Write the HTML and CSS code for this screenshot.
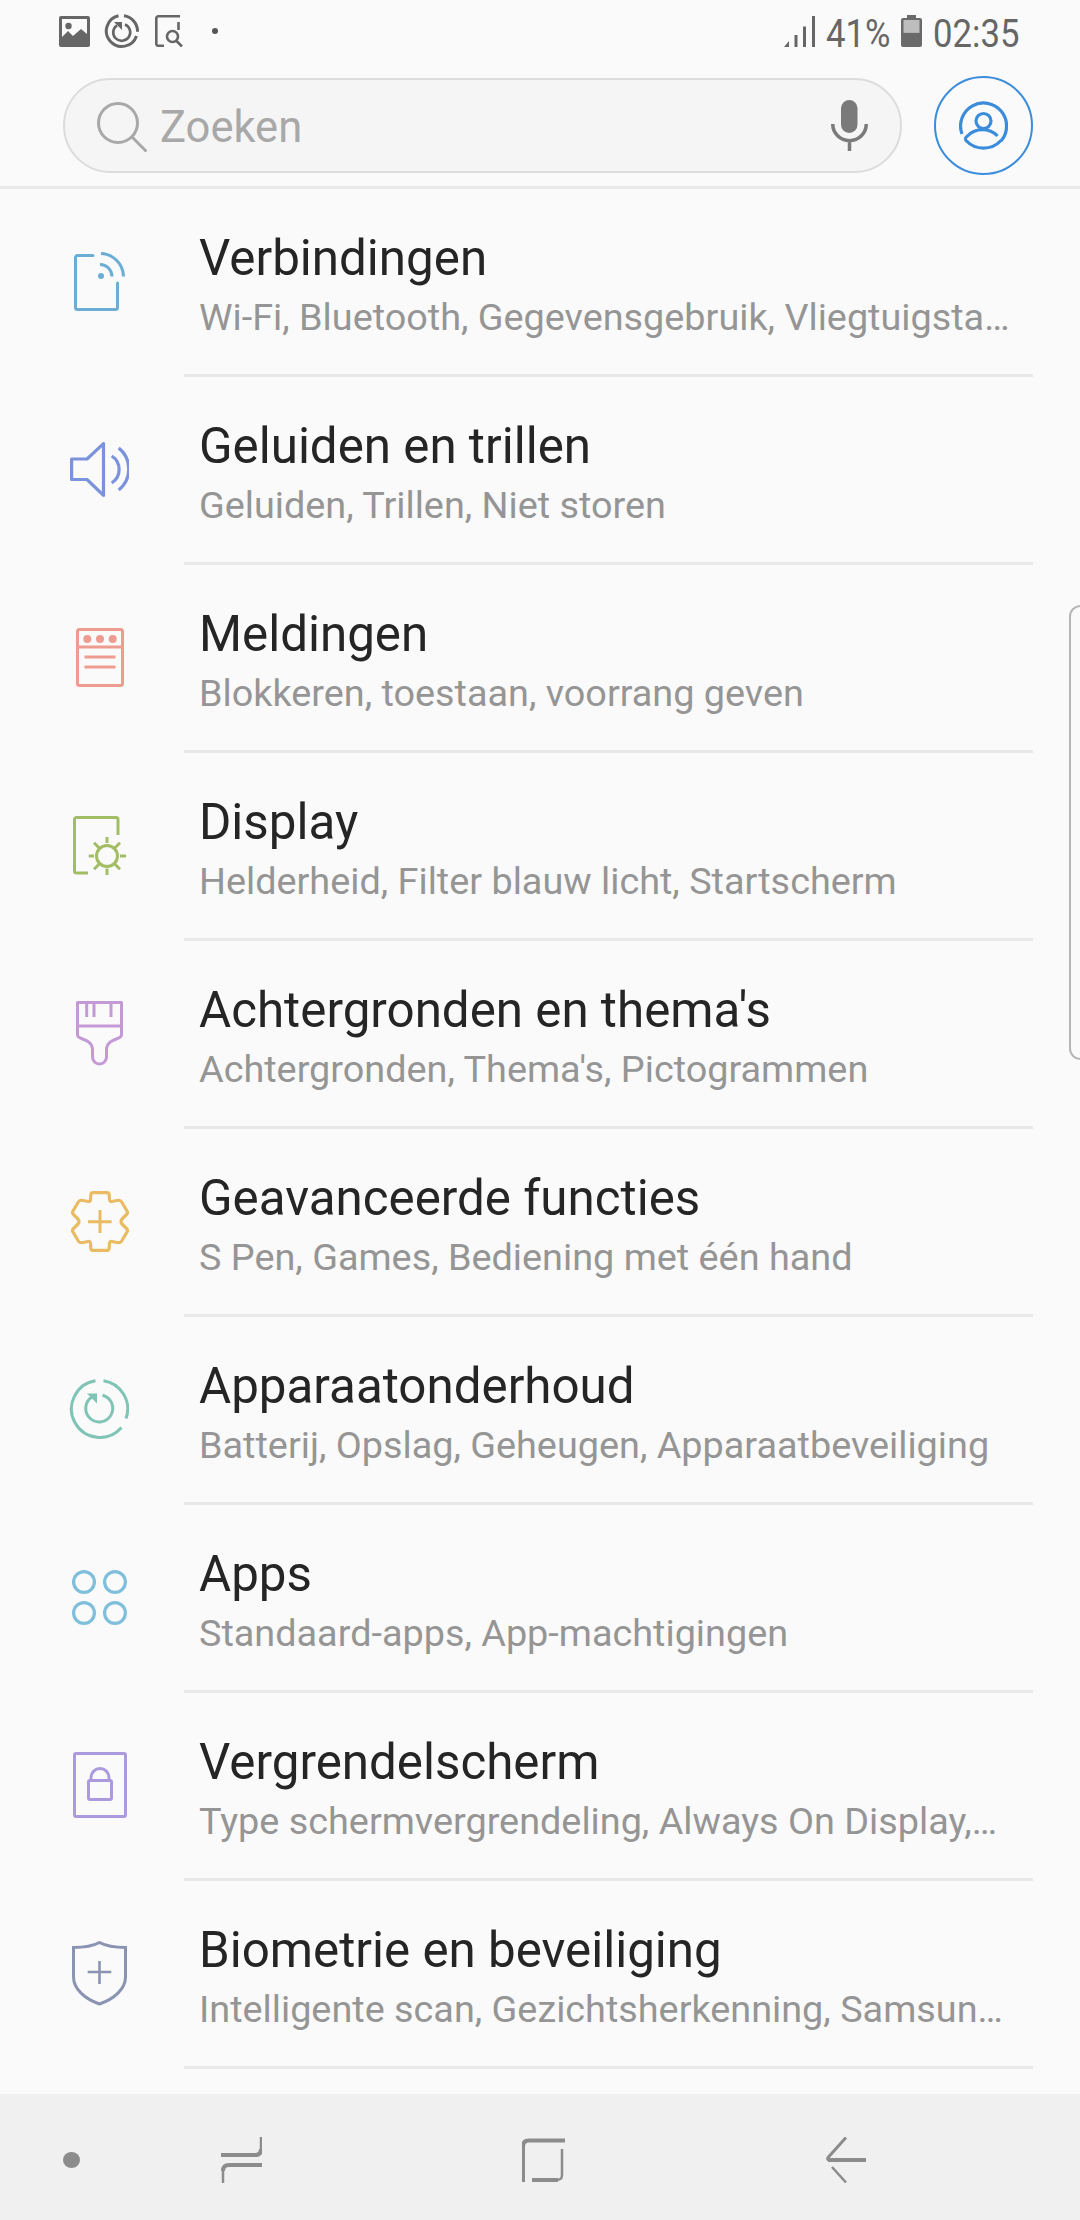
FILE: index.html
```html
<!DOCTYPE html>
<html lang="nl">
<head>
<meta charset="utf-8">
<title>Instellingen</title>
<link rel="stylesheet" href="styles.css">
</head>
<body>
<div class="screen">
  <header class="header">
    <div class="status">
      <div class="status-left">
        <svg width="31" height="31" viewBox="0 0 31 31"><path fill="#666" fill-rule="evenodd" d="M2 0h27a2 2 0 0 1 2 2v27a2 2 0 0 1-2 2H2a2 2 0 0 1-2-2V2a2 2 0 0 1 2-2zM3 3v18l6-6 5 5 8-7 6 5V3z"/><circle cx="9.500" cy="10" r="3.200" fill="#666"/></svg>
        <svg width="35" height="34" viewBox="0 0 35 34" fill="none" stroke="#666" stroke-width="3"><path d="M20 1.800a15.500 15.500 0 0 1 13.500 16M32.500 22A15.500 15.500 0 1 1 14.500 1.800"/><path stroke-width="2.600" d="M21 10.500a8.500 8.500 0 1 1-8 .8"/><path fill="#666" stroke="none" d="M10 8h8v8z"/></svg>
        <svg class="si-doc" width="28" height="32" viewBox="0 0 28 32" fill="none" stroke="#666" stroke-width="2.600"><path d="M25 1.300H3A2 2 0 0 0 1.300 3v26A2 2 0 0 0 3 30.700h6M23.500 7v8"/><circle cx="17.500" cy="21.500" r="5.500"/><path d="M21.500 26l5.500 5.500"/></svg>
        <span class="dot"></span>
      </div>
      <div class="status-right">
        <svg width="31" height="31" viewBox="0 0 31 31" fill="#666"><path d="M0 31l5-6v6zM10.500 19h3v12h-3zM19 10.500h3V31h-3zM28 0h3v31h-3z"/></svg>
        <span class="st pct">41%</span>
        <svg class="bat" width="21" height="32" viewBox="0 0 21 32"><path fill="#bdbdbd" d="M2 4h17v13H2z"/><path fill="#6a6a6a" fill-rule="evenodd" d="M6 0h9v3h4a2 2 0 0 1 2 2v25a2 2 0 0 1-2 2H2a2 2 0 0 1-2-2V5a2 2 0 0 1 2-2h4zM2.500 5v12.500h16V5z"/></svg>
        <span class="st clock">02:35</span>
      </div>
    </div>
    <div class="searchrow">
      <div class="search">
        <svg class="s-ic" width="50" height="50" viewBox="0 0 50 50" fill="none" stroke="#a8a8a8" stroke-width="3"><circle cx="21" cy="21" r="19.500"/><path d="M35 35l14.500 14.500"/></svg>
        <span class="s-text">Zoeken</span>
        <svg class="mic" width="37" height="51" viewBox="0 0 37 51"><rect x="10" y="0" width="16.500" height="33" rx="8.250" fill="#7a7a7a"/><path d="M1.750 24a16.750 16.750 0 0 0 33.500 0M18.500 40v11" fill="none" stroke="#7a7a7a" stroke-width="3.500"/></svg>
      </div>
      <div class="avatar">
        <svg width="49" height="49" viewBox="0 0 49 49" fill="none" stroke="#3b8ddb" stroke-width="3.200"><path d="M3 33A23 23 0 1 1 42 40"/><circle cx="24.500" cy="20" r="7.500"/><path d="M42 39.500a24 24 0 0 1-35 0c-1.500-2 0-3.500 1.500-4.500a21 21 0 0 1 30 0"/></svg>
      </div>
    </div>
  </header>

  <main class="list">
    <div class="row">
      <div class="icon"><svg width="51" height="59" viewBox="0 0 51 59" fill="none" stroke="#6aaed6" stroke-width="3" stroke-linecap="round"><path d="M19 3.500H3.500a2 2 0 0 0-2 2v50a2 2 0 0 0 2 2h38a2 2 0 0 0 2-2V31"/><path stroke-linecap="butt" d="M27 1.500A23.500 23.500 0 0 1 49.500 24.500M26 12.500a12 12 0 0 1 12 12"/><circle cx="27" cy="24" r="3" fill="#6aaed6" stroke="none"/></svg></div>
      <div class="text"><div class="title">Verbindingen</div><div class="sub">Wi-Fi, Bluetooth, Gegevensgebruik, Vliegtuigsta…</div></div>
    </div>
    <div class="row">
      <div class="icon"><svg width="59" height="55" viewBox="0 0 59 55" fill="none" stroke="#7b93dc" stroke-width="3.200" stroke-linecap="round" stroke-linejoin="round"><path d="M1.600 17H17L33.500 1.600v51.800L17 37.500H1.600z"/><path stroke-linecap="butt" d="M41.700 14a16 16 0 0 1 0 27M48.700 6a27 27 0 0 1 0 42"/></svg></div>
      <div class="text"><div class="title">Geluiden en trillen</div><div class="sub">Geluiden, Trillen, Niet storen</div></div>
    </div>
    <div class="row">
      <div class="icon"><svg width="48" height="59" viewBox="0 0 48 59" fill="none" stroke="#ee9c90" stroke-width="3" stroke-linejoin="round"><rect x="1.500" y="1.500" width="45" height="56" rx="2"/><path d="M1.500 19h45M8.500 29h31M8.500 39h31"/><g fill="#ee9c90" stroke="none"><circle cx="11.300" cy="11" r="4"/><circle cx="24" cy="11" r="4"/><circle cx="36.700" cy="11" r="4"/></g></svg></div>
      <div class="text"><div class="title">Meldingen</div><div class="sub">Blokkeren, toestaan, voorrang geven</div></div>
    </div>
    <div class="row">
      <div class="icon"><svg width="53" height="59" viewBox="0 0 53 59" fill="none" stroke="#a3bd64" stroke-width="3"><path d="M15 57H3.500a2 2 0 0 1-2-2V3.500a2 2 0 0 1 2-2H43a2 2 0 0 1 2 2V19"/><circle cx="34" cy="40" r="10.500"/><path d="M34 21v6M34 52.500v6.500M15.700 40H21M47 40h6M21 26.700l5 5M47 26.700l-5 5M21 53.300l5-5M47 53.300l-5-5"/></svg></div>
      <div class="text"><div class="title">Display</div><div class="sub">Helderheid, Filter blauw licht, Startscherm</div></div>
    </div>
    <div class="row">
      <div class="icon"><svg width="47" height="65" viewBox="0 0 47 65" fill="none" stroke="#c49ad6" stroke-width="3" stroke-linejoin="round"><path d="M1.500 1.500h44V34c0 5-14 3-15 14v8a7 7 0 0 1-14 0v-8C15.500 37 1.500 39 1.500 34z"/><path d="M1.500 25h44M10.700 1.500V16M18 1.500V16M35 1.500V16"/></svg></div>
      <div class="text"><div class="title">Achtergronden en thema's</div><div class="sub">Achtergronden, Thema's, Pictogrammen</div></div>
    </div>
    <div class="row">
      <div class="icon"><svg width="58" height="61" viewBox="0 0 58 61" fill="none" stroke="#e9bb62" stroke-width="3.200" stroke-linejoin="round"><path d="M22 1.600H36Q38 1.600 38.200 4L38.500 8.500Q38.700 11 41 10.500L47 9.300Q49.500 9 50.700 11L56 20Q57.200 22 55.500 23.500L51 28Q49 30.500 51 33L55.500 37.500Q57.200 39 56 41L50.700 50Q49.500 52 47 51.700L41 50.500Q38.700 50 38.500 52.500L38.200 57Q38 59.400 36 59.400H22Q20 59.400 19.800 57L19.500 52.500Q19.300 50 17 50.500L11 51.700Q8.500 52 7.300 50L2 41Q.8 39 2.500 37.500L7 33Q9 30.500 7 28L2.500 23.500Q.8 22 2 20L7.300 11Q8.500 9 11 9.300L17 10.500Q19.300 11 19.500 8.500L19.800 4Q20 1.600 22 1.600z"/><path stroke-width="3" d="M29 19v23M17 30.700h23.600"/></svg></div>
      <div class="text"><div class="title">Geavanceerde functies</div><div class="sub">S Pen, Games, Bediening met één hand</div></div>
    </div>
    <div class="row">
      <div class="icon"><svg class="care" width="60" height="60" viewBox="0 0 60 60" fill="none" stroke="#7fc4b4" stroke-width="3"><path d="M34.500 1.700A28.500 28.500 0 0 1 57 39.500M52.500 48.500A28.500 28.500 0 1 1 26.500 1.700"/><path d="M33.500 16.300A13.500 13.500 0 1 1 23 18"/><path fill="#7fc4b4" stroke="none" d="M18 14.500h10v10z"/></svg></div>
      <div class="text"><div class="title">Apparaatonderhoud</div><div class="sub">Batterij, Opslag, Geheugen, Apparaatbeveiliging</div></div>
    </div>
    <div class="row">
      <div class="icon"><svg width="55" height="55" viewBox="0 0 55 55" fill="none" stroke="#7fbfdc" stroke-width="3.200"><circle cx="12" cy="12" r="10.400"/><circle cx="43" cy="12" r="10.400"/><circle cx="12" cy="43" r="10.400"/><circle cx="43" cy="43" r="10.400"/></svg></div>
      <div class="text"><div class="title">Apps</div><div class="sub">Standaard-apps, App-machtigingen</div></div>
    </div>
    <div class="row">
      <div class="icon"><svg width="54" height="66" viewBox="0 0 54 66" fill="none" stroke="#ab9ade" stroke-width="3" stroke-linejoin="round"><rect x="1.500" y="1.500" width="51" height="63" rx="1.500"/><rect x="15.500" y="28.500" width="23" height="19" rx="1.500"/><path d="M18 28.500v-3a9 9 0 0 1 18 0v3"/></svg></div>
      <div class="text"><div class="title">Vergrendelscherm</div><div class="sub">Type schermvergrendeling, Always On Display,…</div></div>
    </div>
    <div class="row">
      <div class="icon"><svg width="55" height="65" viewBox="0 0 55 65" fill="none" stroke="#8a94b2" stroke-width="3"><path d="M1.500 6.500C12 6.500 21 5 27.500 1.500 34 5 43 6.500 53.500 6.500V36C53.500 48 42 58 27.500 63 13 58 1.500 48 1.500 36z"/><path stroke-width="2.600" d="M27.500 20v23M15.700 31h23.600"/></svg></div>
      <div class="text"><div class="title">Biometrie en beveiliging</div><div class="sub">Intelligente scan, Gezichtsherkenning, Samsun…</div></div>
    </div>
  </main>

  <div class="edge"></div>

  <nav class="nav">
    <span class="nav-dot"></span>
    <svg class="nav-recents" width="41" height="46" viewBox="0 0 41 46" fill="none" stroke="#8c8c8c"><path stroke-width="4" d="M0 18h34c4 0 6-2 6-6"/><path stroke-width="2.500" d="M40 12V0"/><path stroke-width="4" d="M41 28H8c-4 0-6 2-6 6"/><path stroke-width="2.500" d="M2 34v12"/></svg>
    <svg class="nav-home" width="43" height="44" viewBox="0 0 43 44" fill="none" stroke="#8c8c8c"><path stroke-width="4" d="M43 2.500H7C3 2.500 1 4.500 1 8.500V44"/><path stroke-width="2.500" d="M40 11v26c0 4-2 5-6 5H10"/><path stroke-width="4" d="M36 42H10"/></svg>
    <svg class="nav-back" width="40" height="46" viewBox="0 0 40 46" fill="none" stroke="#8c8c8c"><path stroke-width="3" d="M20 .5L2.500 20c-1.500 2-1 3 1 3"/><path stroke-width="4" d="M2 23h38"/><path stroke-width="2.500" d="M6 30l14 15.500"/></svg>
  </nav>
</div>
</body>
</html>
```

FILE: styles.css
```css
* { box-sizing: border-box; }
html, body { margin: 0; padding: 0; }
body {
  width: 1080px;
  height: 2220px;
  overflow: hidden;
  background: #fafafa;
  font-family: Roboto, "Noto Sans", sans-serif;
}
.screen {
  position: relative;
  width: 1080px;
  height: 2220px;
  display: flex;
  flex-direction: column;
  background: #fafafa;
  overflow: hidden;
}
.header {
  height: 189px;
  flex: none;
  border-bottom: 3px solid #e8e8e8;
}
.status {
  height: 64px;
  padding: 14px 62px 0 59px;
  display: flex;
  justify-content: space-between;
  align-items: flex-start;
}
.status-left { display: flex; align-items: center; height: 34px; gap: 14px; }
.si-doc { margin-left: 2px; }
.dot {
  width: 6px;
  height: 6px;
  margin-left: 15px;
  border-radius: 50%;
  background: #555;
}
.status-right {
  display: flex;
  align-items: center;
  height: 34px;
}
.st {
  display: block;
  margin-top: 5px;
  font-size: 39px;
  line-height: 34px;
  color: #666;
  white-space: nowrap;
  transform: scaleX(.89);
  transform-origin: left center;
}
.pct { width: 64px; margin-left: 11px; }
.bat { margin-left: 11px; }
.clock { width: 85px; margin-left: 11px; }
.searchrow {
  height: 122px;
  padding: 14px 47px 0 63px;
  display: flex;
  align-items: flex-start;
  justify-content: space-between;
}
.search {
  width: 839px;
  height: 95px;
  padding: 0 32px;
  display: flex;
  align-items: center;
  background: #f5f5f5;
  border: 2px solid #dcdcdc;
  border-radius: 48px;
}
.s-ic { flex: none; margin-top: 3px; }
.s-text { flex: 1; margin: 3px 0 0 13px; font-size: 43.500px; color: #a8a8a8; }
.mic { flex: none; }
.avatar {
  width: 99px;
  height: 99px;
  margin-top: -2px;
  display: flex;
  align-items: center;
  justify-content: center;
  border: 2px solid #3b8ddb;
  border-radius: 50%;
}
.list { flex: 1; }
.row {
  height: 188px;
  display: flex;
  align-items: stretch;
  margin-right: 47px;
}
.icon {
  width: 199px;
  flex: none;
  margin-right: -15px;
  padding-bottom: 4px;
  display: flex;
  align-items: center;
  justify-content: center;
}
.care { margin-right: 1px; }
.text {
  flex: 1;
  padding: 41px 0 0 15px;
  border-bottom: 3px solid #e8e8e8;
}
.title {
  font-size: 49.300px;
  line-height: 56px;
  color: #252525;
  white-space: nowrap;
}
.sub {
  font-size: 37.800px;
  line-height: 46px;
  margin-top: 8px;
  color: #959595;
  white-space: nowrap;
}
.edge {
  position: absolute;
  right: -12px;
  top: 605px;
  width: 23px;
  height: 455px;
  border: 2px solid #b5b5b5;
  border-radius: 14px;
  background: #fafafa;
}
.nav {
  height: 126px;
  flex: none;
  padding: 6px 0 0 63px;
  background: #f0f0f0;
  display: flex;
  align-items: center;
}
.nav-dot {
  width: 17px;
  height: 16px;
  border-radius: 50%;
  background: #8c8c8c;
}
.nav-recents { margin-left: 141px; }
.nav-home { margin-left: 260px; }
.nav-back { margin-left: 261px; }
```
